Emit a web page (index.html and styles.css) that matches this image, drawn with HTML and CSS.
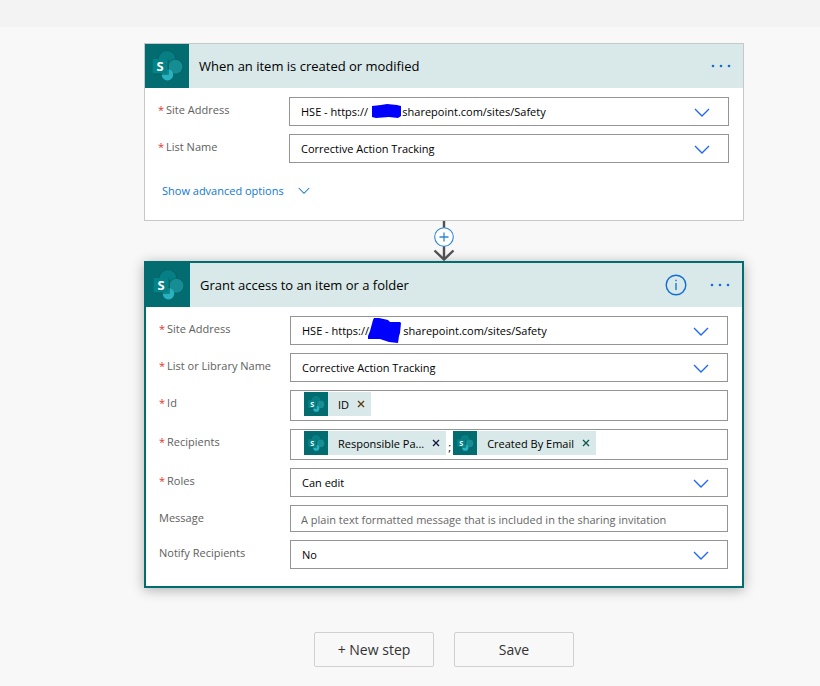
FILE: index.html
```html
<!DOCTYPE html>
<html lang="en">
<head>
  <meta charset="UTF-8">
  <meta name="viewport" content="width=device-width, initial-scale=1.0">
  <title>Edit your flow</title>
  <link rel="stylesheet" href="styles.css">
</head>
<body>
  <!-- Shared icons -->
  <svg class="sprite" aria-hidden="true">
    <symbol id="sharepoint" viewBox="0 0 44 44">
      <circle cx="22" cy="15.5" r="9.5" fill="#025c60" opacity="0.5"/>
      <circle cx="22" cy="15.5" r="8.5" fill="#067e83"/>
      <circle cx="30.5" cy="22.8" r="7.8" fill="#025c60" opacity="0.5"/>
      <circle cx="30.5" cy="22.8" r="7" fill="#168c93"/>
      <circle cx="22.5" cy="30.7" r="5.7" fill="#29b3c0"/>
      <rect x="8.5" y="15.5" width="15.5" height="15.5" rx="1" fill="#02595c" opacity="0.5"/>
      <rect x="7.7" y="15" width="14.8" height="14.5" rx="1" fill="#038387"/>
      <text x="15" y="27" class="logo-letter">S</text>
    </symbol>
    <symbol id="chevron" viewBox="0 0 16 10">
      <path d="M1 1l7 7 7-7" fill="none" stroke="currentColor" stroke-width="1.4"/>
    </symbol>
    <symbol id="dots" viewBox="0 0 20 4">
      <circle cx="2" cy="2" r="1.3" fill="currentColor"/>
      <circle cx="10" cy="2" r="1.3" fill="currentColor"/>
      <circle cx="18" cy="2" r="1.3" fill="currentColor"/>
    </symbol>
    <symbol id="close" viewBox="0 0 8 8">
      <path d="M1 1l6 6M7 1L1 7" fill="none" stroke="currentColor" stroke-width="1.3"/>
    </symbol>
  </svg>

  <header class="toolbar"></header>

  <main class="designer">
    <section class="card">
      <div class="card-header">
        <svg class="card-logo"><use href="#sharepoint"/></svg>
        <h2>When an item is created or modified</h2>
        <button type="button" class="icon-button" aria-label="Menu"><svg class="dots"><use href="#dots"/></svg></button>
      </div>
      <div class="card-body">
        <div class="row">
          <label for="trigger-site"><span class="required">*</span>Site Address</label>
          <div class="dropdown">
            <select id="trigger-site"><option>HSE - https://&nbsp;&nbsp;&nbsp;&nbsp;&nbsp;&nbsp;&nbsp;&nbsp;&nbsp;&nbsp;&nbsp;&nbsp;sharepoint.com/sites/Safety</option></select>
            <svg class="chevron"><use href="#chevron"/></svg>
            <svg class="scribble" viewBox="0 0 36 28"><path d="M5 9l9-1 6-1 10 1 4 1 0 10-3 2-9-1-13 1-4-1z" fill="#0000ff"/></svg>
          </div>
        </div>
        <div class="row">
          <label for="trigger-list"><span class="required">*</span>List Name</label>
          <div class="dropdown">
            <select id="trigger-list"><option>Corrective Action Tracking</option></select>
            <svg class="chevron"><use href="#chevron"/></svg>
          </div>
        </div>
        <button type="button" class="advanced">Show advanced options <svg><use href="#chevron"/></svg></button>
      </div>
    </section>

    <div class="connector">
      <button type="button" aria-label="Insert a new step">
        <svg viewBox="0 0 24 40">
          <path d="M12 0v38" stroke="#505050" stroke-width="2.4"/>
          <path d="M2.5 29.5l9.5 9 9.5-9" fill="none" stroke="#505050" stroke-width="2.4"/>
          <circle cx="12" cy="16" r="9.3" fill="#fff" stroke="#2b88d8" stroke-width="1.1"/>
          <path d="M12 11.5v9M7.5 16h9" stroke="#2b88d8" stroke-width="1.3"/>
        </svg>
      </button>
    </div>

    <section class="card selected">
      <div class="card-header">
        <svg class="card-logo"><use href="#sharepoint"/></svg>
        <h2>Grant access to an item or a folder</h2>
        <button type="button" class="icon-button" aria-label="Information">
          <svg class="info" viewBox="0 0 22 22">
            <circle cx="11" cy="11" r="9.8" fill="none" stroke="currentColor" stroke-width="1.4"/>
            <path d="M11 9v7M11 5.8v1.5" stroke="currentColor" stroke-width="1.3"/>
          </svg>
        </button>
        <button type="button" class="icon-button" aria-label="Menu"><svg class="dots"><use href="#dots"/></svg></button>
      </div>
      <div class="card-body">
        <div class="row">
          <label for="site"><span class="required">*</span>Site Address</label>
          <div class="dropdown">
            <select id="site"><option>HSE - https://&nbsp;&nbsp;&nbsp;&nbsp;&nbsp;&nbsp;&nbsp;&nbsp;&nbsp;&nbsp;&nbsp;&nbsp;sharepoint.com/sites/Safety</option></select>
            <svg class="chevron"><use href="#chevron"/></svg>
            <svg class="scribble" viewBox="0 0 36 28"><path d="M5 4l1-2 5 0 9 2 2 2 10 0 1 1-1 10-1 3-1 7-9-1-9-3-12 0 0-3 2-5z" fill="#0000ff"/></svg>
          </div>
        </div>
        <div class="row">
          <label for="list"><span class="required">*</span>List or Library Name</label>
          <div class="dropdown">
            <select id="list"><option>Corrective Action Tracking</option></select>
            <svg class="chevron"><use href="#chevron"/></svg>
          </div>
        </div>
        <div class="row">
          <label for="item-id"><span class="required">*</span>Id</label>
          <div class="tokens">
            <span class="token"><svg class="token-logo"><use href="#sharepoint"/></svg>ID<button type="button" class="remove brown" aria-label="Remove ID"><svg><use href="#close"/></svg></button></span>
            <input type="text" id="item-id">
          </div>
        </div>
        <div class="row">
          <label for="recipients"><span class="required">*</span>Recipients</label>
          <div class="tokens">
            <span class="token"><svg class="token-logo"><use href="#sharepoint"/></svg>Responsible Pa...<button type="button" class="remove navy" aria-label="Remove Responsible Party"><svg><use href="#close"/></svg></button></span>
            <span class="separator">;</span>
            <span class="token"><svg class="token-logo"><use href="#sharepoint"/></svg>Created By Email<button type="button" class="remove green" aria-label="Remove Created By Email"><svg><use href="#close"/></svg></button></span>
            <input type="text" id="recipients">
          </div>
        </div>
        <div class="row">
          <label for="roles"><span class="required">*</span>Roles</label>
          <div class="dropdown">
            <select id="roles"><option>Can edit</option></select>
            <svg class="chevron"><use href="#chevron"/></svg>
          </div>
        </div>
        <div class="row">
          <label for="message">Message</label>
          <input type="text" id="message" class="textbox" placeholder="A plain text formatted message that is included in the sharing invitation">
        </div>
        <div class="row">
          <label for="notify">Notify Recipients</label>
          <div class="dropdown">
            <select id="notify"><option>No</option></select>
            <svg class="chevron"><use href="#chevron"/></svg>
          </div>
        </div>
      </div>
    </section>

    <div class="actions">
      <button type="button">+ New step</button>
      <button type="button">Save</button>
    </div>
  </main>
</body>
</html>
```

FILE: styles.css
```css
* {
  box-sizing: border-box;
}
body {
  margin: 0;
  background-color: #f8f8f8;
  color: #000;
  font-family: "Segoe UI", "Open Sans", "Noto Sans", sans-serif;
  font-size: 11px;
}
button, input, select {
  font: inherit;
}
button {
  padding: 0;
  border: 0;
  background: none;
  cursor: pointer;
}
svg {
  display: block;
}
.sprite {
  display: none;
}
.toolbar {
  height: 27px;
  background-color: #f3f3f3;
}
.designer {
  padding: 16px 76px 19px 144px;
}

/* Cards */
.card {
  background-color: #fff;
  border: 1px solid #c8c8c8;
}
.card.selected {
  border: 2px solid #036c70;
  box-shadow: 0 2px 12px rgba(0, 0, 0, 0.3);
}
.card-header {
  display: flex;
  align-items: center;
  gap: 23px;
  height: 44px;
  padding-right: 12px;
  background-color: #d9e8e8;
}
.card-header h2 {
  flex: 1;
  margin: 0 0 0 -13px;
  font-size: 13px;
  font-weight: normal;
}
.card-logo {
  width: 44px;
  height: 44px;
  background-color: #036c70;
}
.logo-letter {
  fill: #fff;
  font-size: 13px;
  font-weight: bold;
  text-anchor: middle;
}
.icon-button {
  color: #0f6fd6;
}
.dots {
  width: 20px;
  height: 4px;
}
.info {
  width: 22px;
  height: 22px;
}
.card-body {
  display: flex;
  flex-direction: column;
  gap: 8px;
  padding: 9px 14px 17px 13px;
}

/* Parameter rows */
.row {
  display: grid;
  grid-template-columns: 131px minmax(0, 1fr);
  align-items: start;
}
.row label {
  color: #605e5c;
  line-height: 26px;
}
.required {
  margin-right: 2px;
  color: #e0342f;
}
.dropdown {
  position: relative;
}
.dropdown select {
  display: block;
  width: 100%;
  height: 29px;
  padding: 0 40px 0 11px;
  border: 1px solid #949494;
  border-radius: 0;
  background-color: #fff;
  color: #000;
  appearance: none;
}
.chevron {
  position: absolute;
  top: 11px;
  right: 19px;
  width: 16px;
  height: 10px;
  color: #2266f2;
  pointer-events: none;
}
.scribble {
  position: absolute;
  top: 0;
  left: 78px;
  width: 36px;
  height: 28px;
  pointer-events: none;
}
.textbox {
  width: 100%;
  height: 27px;
  padding: 2px 10px 0;
  border: 1px solid #949494;
}
.textbox::placeholder {
  color: #666;
}
.advanced {
  display: flex;
  align-items: center;
  gap: 14px;
  align-self: flex-start;
  margin: 10px 0 2px 4px;
  line-height: 20px;
  color: #0f78d0;
}
.advanced svg {
  width: 12px;
  height: 8px;
}

/* Dynamic content tokens */
.tokens {
  display: flex;
  height: 31px;
  padding: 1px 13px 4px;
  border: 1px solid #949494;
}
.tokens input {
  flex: 1;
  width: 0;
  min-width: 0;
  padding: 0;
  border: 0;
  outline: 0;
}
.token {
  display: flex;
  align-items: center;
  height: 24px;
  padding-right: 6px;
  background-color: #d9e8e8;
  white-space: nowrap;
}
.token-logo {
  width: 24px;
  height: 24px;
  margin-right: 10px;
  background-color: #036c70;
}
.remove {
  margin-left: 8px;
}
.remove svg {
  width: 8px;
  height: 8px;
}
.brown {
  color: #5a3c10;
}
.navy {
  color: #14143c;
}
.green {
  color: #0b5a50;
}
.separator {
  padding: 0 2px;
  line-height: 32px;
}

/* Arrow between the cards */
.connector {
  display: flex;
  justify-content: center;
}
.connector svg {
  width: 24px;
  height: 40px;
}

.actions {
  display: flex;
  justify-content: center;
  gap: 20px;
  margin-top: 44px;
}
.actions button {
  width: 120px;
  height: 35px;
  border: 1px solid #d0d0d0;
  border-radius: 2px;
  color: #333;
  font-size: 14px;
}
```
